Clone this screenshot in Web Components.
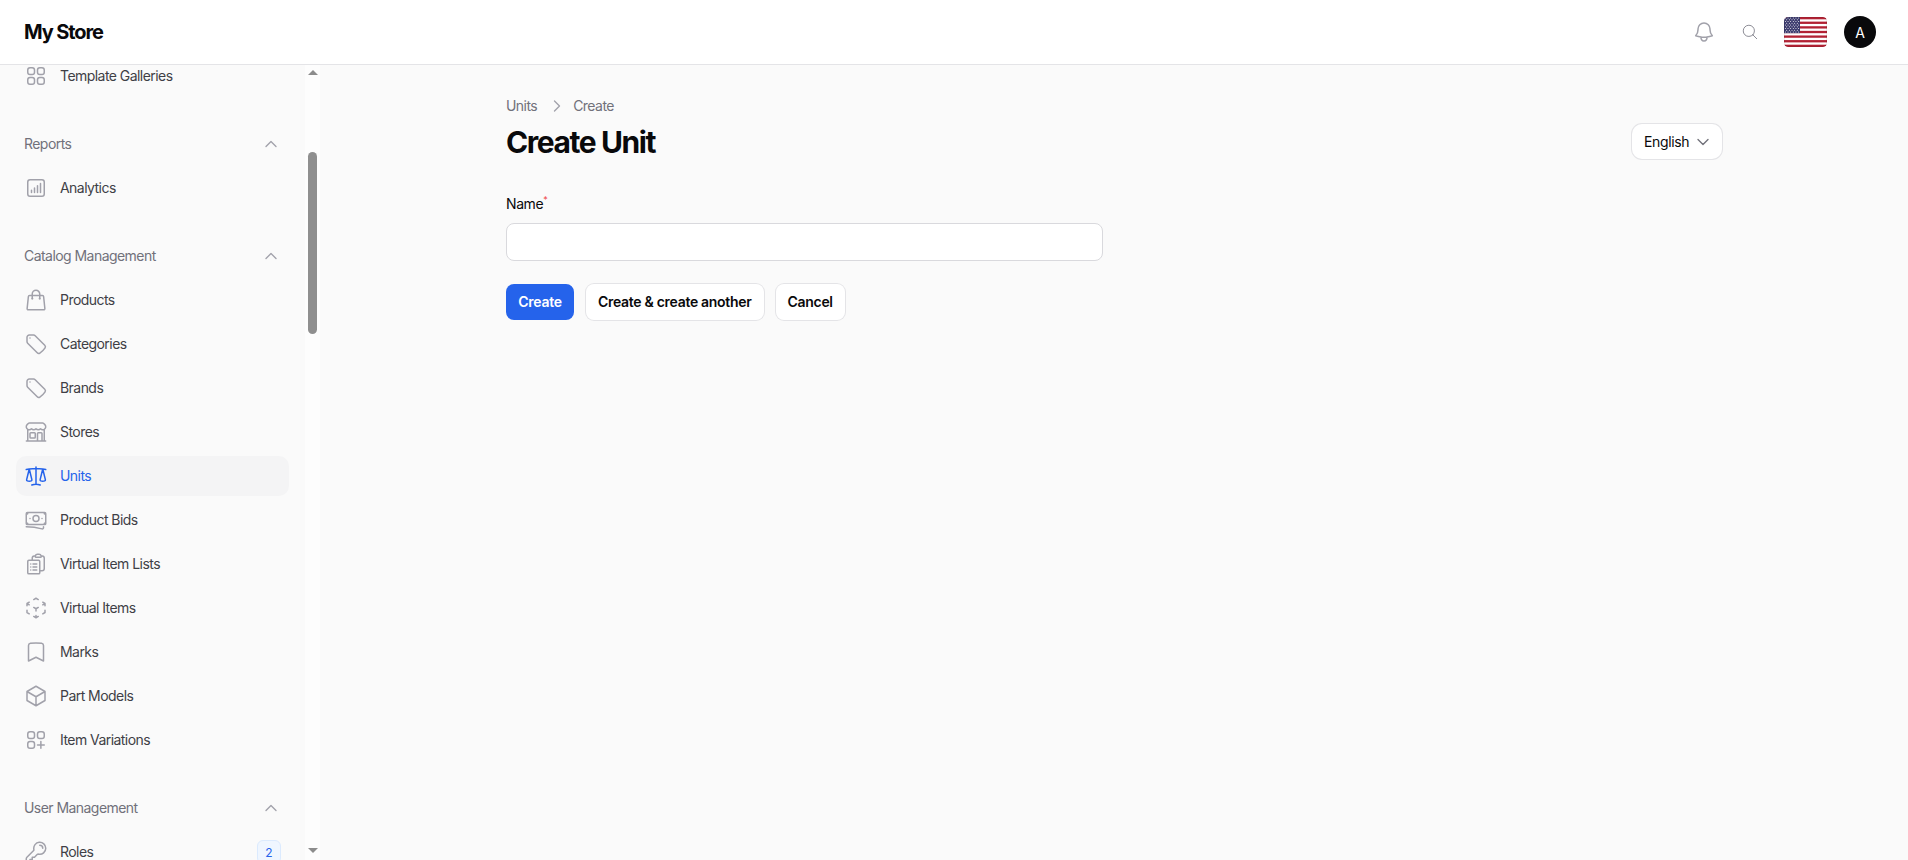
<!doctype html>
<html lang="en">
<head>
<meta charset="utf-8">
<title>Create Unit</title>
<style>
  html, body { margin: 0; height: 100%; overflow: hidden; }
  body { font-family: Inter, "Liberation Sans", sans-serif; background: #fafafa; color: #09090b; }
  app-shell { height: 860px; }
</style>
</head>
<body>
<app-shell>
  <top-bar slot="top" title="My Store"></top-bar>
  <side-nav slot="side">
    <nav-item icon="squares">Template Galleries</nav-item>
    <nav-group label="Reports">
      <nav-item icon="chart">Analytics</nav-item>
    </nav-group>
    <nav-group label="Catalog Management">
      <nav-item icon="bag">Products</nav-item>
      <nav-item icon="tag">Categories</nav-item>
      <nav-item icon="tag">Brands</nav-item>
      <nav-item icon="store">Stores</nav-item>
      <nav-item icon="scale" active>Units</nav-item>
      <nav-item icon="banknotes">Product Bids</nav-item>
      <nav-item icon="clipboard">Virtual Item Lists</nav-item>
      <nav-item icon="cubeTransparent">Virtual Items</nav-item>
      <nav-item icon="bookmark">Marks</nav-item>
      <nav-item icon="cube">Part Models</nav-item>
      <nav-item icon="squaresPlus">Item Variations</nav-item>
    </nav-group>
    <nav-group label="User Management">
      <nav-item icon="key" badge="2">Roles</nav-item>
    </nav-group>
  </side-nav>
  <create-page></create-page>
</app-shell>

<script>
const ICONS = {
  squares: 'M3.75 6A2.25 2.25 0 0 1 6 3.75h2.25A2.25 2.25 0 0 1 10.5 6v2.25a2.25 2.25 0 0 1-2.25 2.25H6a2.25 2.25 0 0 1-2.25-2.25V6ZM3.75 15.75A2.25 2.25 0 0 1 6 13.5h2.25a2.25 2.25 0 0 1 2.25 2.25V18a2.25 2.25 0 0 1-2.25 2.25H6A2.25 2.25 0 0 1 3.75 18v-2.25ZM13.5 6a2.25 2.25 0 0 1 2.25-2.25H18A2.25 2.25 0 0 1 20.25 6v2.25A2.25 2.25 0 0 1 18 10.5h-2.25a2.25 2.25 0 0 1-2.25-2.25V6ZM13.5 15.75a2.25 2.25 0 0 1 2.25-2.25H18a2.25 2.25 0 0 1 2.25 2.25V18A2.25 2.25 0 0 1 18 20.25h-2.25A2.25 2.25 0 0 1 13.5 18v-2.25Z',
  chart: 'M7.5 14.25v2.25m3-4.5v4.5m3-6.75v6.75m3-9v9M6 20.25h12A2.25 2.25 0 0 0 20.25 18V6A2.25 2.25 0 0 0 18 3.75H6A2.25 2.25 0 0 0 3.75 6v12A2.25 2.25 0 0 0 6 20.25Z',
  bag: 'M15.75 10.5V6a3.75 3.75 0 1 0-7.5 0v4.5m11.356-1.993 1.263 12c.07.665-.45 1.243-1.119 1.243H4.25a1.125 1.125 0 0 1-1.12-1.243l1.264-12A1.125 1.125 0 0 1 5.513 7.5h12.974c.576 0 1.059.435 1.119 1.007ZM8.625 10.5a.375.375 0 1 1-.75 0 .375.375 0 0 1 .75 0Zm7.5 0a.375.375 0 1 1-.75 0 .375.375 0 0 1 .75 0Z',
  tag: 'M9.568 3H5.25A2.25 2.25 0 0 0 3 5.25v4.318c0 .597.237 1.17.659 1.591l9.581 9.581c.699.699 1.78.872 2.607.33a18.095 18.095 0 0 0 5.223-5.223c.542-.827.369-1.908-.33-2.607L11.16 3.66A2.25 2.25 0 0 0 9.568 3ZM6 6h.008v.008H6V6Z',
  store: 'M13.5 21v-7.5a.75.75 0 0 1 .75-.75h3a.75.75 0 0 1 .75.75V21m-4.5 0H2.36m11.14 0H18m0 0h3.64m-1.39 0V9.349M3.75 21V9.349m0 0a3.001 3.001 0 0 0 3.75-.615A2.993 2.993 0 0 0 9.75 9.75c.896 0 1.7-.393 2.25-1.016a2.993 2.993 0 0 0 2.25 1.016c.896 0 1.7-.393 2.25-1.015a3.001 3.001 0 0 0 3.75.614m-16.5 0a3.004 3.004 0 0 1-.621-4.72l1.189-1.19A1.5 1.5 0 0 1 5.378 3h13.243a1.5 1.5 0 0 1 1.06.44l1.19 1.189a3 3 0 0 1-.621 4.72M6.75 18h3.75a.75.75 0 0 0 .75-.75V13.5a.75.75 0 0 0-.75-.75H6.75a.75.75 0 0 0-.75.75v3.75c0 .414.336.75.75.75Z',
  scale: 'M12 3v17.25m0 0c-1.472 0-2.882.265-4.185.75M12 20.25c1.472 0 2.882.265 4.185.75M18.75 4.97A48.416 48.416 0 0 0 12 4.5c-2.291 0-4.545.16-6.75.47m13.5 0c1.01.143 2.01.317 3 .52m-3-.52 2.62 10.726c.122.499-.106 1.028-.589 1.202a5.988 5.988 0 0 1-2.031.352 5.988 5.988 0 0 1-2.031-.352c-.483-.174-.711-.703-.59-1.202L18.75 4.971Zm-16.5.52c.99-.203 1.99-.377 3-.52m0 0 2.62 10.726c.122.499-.106 1.028-.589 1.202a5.989 5.989 0 0 1-2.031.352 5.989 5.989 0 0 1-2.031-.352c-.483-.174-.711-.703-.59-1.202L5.25 4.971Z',
  banknotes: 'M2.25 18.75a60.07 60.07 0 0 1 15.797 2.101c.727.198 1.453-.342 1.453-1.096V18.75M3.75 4.5v.75A.75.75 0 0 1 3 6h-.75m0 0v-.375c0-.621.504-1.125 1.125-1.125H20.25M2.25 6v9m18-10.5v.75c0 .414.336.75.75.75h.75m-1.5-1.5h.375c.621 0 1.125.504 1.125 1.125v9.75c0 .621-.504 1.125-1.125 1.125h-.375m1.5-1.5H21a.75.75 0 0 0-.75.75v.75m0 0H3.75m0 0h-.375a1.125 1.125 0 0 1-1.125-1.125V15m1.5 1.5v-.75A.75.75 0 0 0 3 15h-.75M15 10.5a3 3 0 1 1-6 0 3 3 0 0 1 6 0Zm3 0h.008v.008H18V10.5Zm-12 0h.008v.008H6V10.5Z',
  clipboard: 'M9 12h3.75M9 15h3.75M9 18h3.75m3 .75H18a2.25 2.25 0 0 0 2.25-2.25V6.108c0-1.135-.845-2.098-1.976-2.192a48.424 48.424 0 0 0-1.123-.08m-5.801 0c-.065.21-.1.433-.1.664 0 .414.336.75.75.75h4.5a.75.75 0 0 0 .75-.75 2.25 2.25 0 0 0-.1-.664m-5.8 0A2.251 2.251 0 0 1 13.5 2.25H15c1.012 0 1.867.668 2.15 1.586m-5.8 0c-.376.023-.75.05-1.124.08C9.095 4.01 8.25 4.973 8.25 6.108V8.25m0 0H4.875c-.621 0-1.125.504-1.125 1.125v11.25c0 .621.504 1.125 1.125 1.125h9.75c.621 0 1.125-.504 1.125-1.125V9.375c0-.621-.504-1.125-1.125-1.125H8.25ZM6.75 12h.008v.008H6.75V12Zm0 3h.008v.008H6.75V15Zm0 3h.008v.008H6.75V18Z',
  cubeTransparent: 'm21 7.5-2.25-1.313M21 7.5v2.25m0-2.25-2.25 1.313M3 7.5l2.25-1.313M3 7.5l2.25 1.313M3 7.5v2.25m9 3 2.25-1.313M12 12.75l-2.25-1.313M12 12.75V15m0 6.75 2.25-1.313M12 21.75V19.5m0 2.25-2.25-1.313m0-16.875L12 2.25l2.25 1.313M21 14.25v2.25l-2.25 1.313m-13.5 0L3 16.5v-2.25',
  bookmark: 'M17.593 3.322c1.1.128 1.907 1.077 1.907 2.185V21L12 17.25 4.5 21V5.507c0-1.108.806-2.057 1.907-2.185a48.507 48.507 0 0 1 11.186 0Z',
  cube: 'm21 7.5-9-5.25L3 7.5m18 0-9 5.25m9-5.25v9l-9 5.25M3 7.5l9 5.25M3 7.5v9l9 5.25m0-9v9',
  squaresPlus: 'M13.5 16.875h3.375m0 0h3.375m-3.375 0V13.5m0 3.375v3.375M6 10.5h2.25a2.25 2.25 0 0 0 2.25-2.25V6a2.25 2.25 0 0 0-2.25-2.25H6A2.25 2.25 0 0 0 3.75 6v2.25A2.25 2.25 0 0 0 6 10.5Zm0 9.75h2.25A2.25 2.25 0 0 0 10.5 18v-2.25a2.25 2.25 0 0 0-2.25-2.25H6a2.25 2.25 0 0 0-2.25 2.25V18A2.25 2.25 0 0 0 6 20.25Zm9.75-9.75H18a2.25 2.25 0 0 0 2.25-2.25V6A2.25 2.25 0 0 0 18 3.75h-2.25A2.25 2.25 0 0 0 13.5 6v2.25a2.25 2.25 0 0 0 2.25 2.25Z',
  key: 'M15.75 5.25a3 3 0 0 1 3 3m3 0a6 6 0 0 1-7.029 5.912c-.563-.097-1.159.026-1.563.43L10.5 17.25H8.25v2.25H6v2.25H2.25v-2.818c0-.597.237-1.17.659-1.591l6.499-6.499c.404-.404.527-1 .43-1.563A6 6 0 1 1 21.75 8.25Z',
  chevronUp: 'm4.5 15.75 7.5-7.5 7.5 7.5',
  chevronDown: 'm19.5 8.25-7.5 7.5-7.5-7.5',
  chevronRight: 'm8.25 4.5 7.5 7.5-7.5 7.5',
  bell: 'M14.857 17.082a23.848 23.848 0 0 0 5.454-1.31A8.967 8.967 0 0 1 18 9.75V9A6 6 0 0 0 6 9v.75a8.967 8.967 0 0 1-2.312 6.022c1.733.64 3.56 1.085 5.455 1.31m5.714 0a24.255 24.255 0 0 1-5.714 0m5.714 0a3 3 0 1 1-5.714 0',
  search: 'm21 21-5.197-5.197m0 0A7.5 7.5 0 1 0 5.196 5.196a7.5 7.5 0 0 0 10.607 10.607Z'
};

class HeroIcon extends HTMLElement {
  static get observedAttributes() {
    return ['name'];
  }

  constructor() {
    super();
    this.attachShadow({mode: 'open'});
  }

  connectedCallback() {
    this._render();
  }

  attributeChangedCallback() {
    this._render();
  }

  _render() {
    const size = this.getAttribute('size') || 24;
    const stroke = this.getAttribute('stroke') || 1.5;
    this.shadowRoot.innerHTML = `
      <style>
        :host { display: inline-flex; flex: none; width: ${size}px; height: ${size}px; color: inherit; }
        svg { display: block; width: 100%; height: 100%; }
      </style>
      <svg viewBox="0 0 24 24" fill="none" stroke="currentColor" stroke-width="${stroke}" stroke-linecap="round" stroke-linejoin="round"><path d="${ICONS[this.getAttribute('name')] || ''}"/></svg>`;
  }
}
customElements.define('hero-icon', HeroIcon);

var shellTemplate = document.createElement('template');
shellTemplate.innerHTML = `
  <style>
    :host { display: grid; grid-template-rows: 65px 1fr; grid-template-columns: 320px 1fr; }
    .top { grid-column: 1 / -1; }
    .main { min-width: 0; overflow: hidden; }
    .side { display: flex; overflow: hidden; min-height: 0; }
  </style>
  <div class="top"><slot name="top"></slot></div>
  <div class="side"><slot name="side"></slot></div>
  <div class="main"><slot></slot></div>
`;
class AppShell extends HTMLElement {
  constructor() {
    super();
    this.attachShadow({mode: 'open'});
    this.shadowRoot.appendChild(shellTemplate.content.cloneNode(true));
  }
}
customElements.define('app-shell', AppShell);

var topTemplate = document.createElement('template');
topTemplate.innerHTML = `
  <style>
    :host { display: flex; align-items: center; height: 65px; box-sizing: border-box; background: #fff; border-bottom: 1px solid #e4e4e7; padding: 0 32px 0 24px; }
    .brand { font-size: 20px; font-weight: 700; letter-spacing: -1.1px; color: #09090b; }
    .tools { margin-left: auto; display: flex; align-items: center; }
    .bell { color: #a1a1aa; margin-right: 25px; }
    .search { color: #8a8a93; margin-right: 25px; }
    .flag { display: block; width: 43px; height: 30px; border-radius: 4px; margin-right: 17px; }
    .avatar { width: 32px; height: 32px; border-radius: 50%; background: #09090b; color: #fff; font-size: 14px; display: flex; align-items: center; justify-content: center; }
  </style>
  <div class="brand"></div>
  <div class="tools">
    <hero-icon class="bell" name="bell" size="24"></hero-icon>
    <hero-icon class="search" name="search" size="18" stroke="1.3"></hero-icon>
    <svg class="flag" viewBox="0 0 43 30">
      <defs><clipPath id="round"><rect width="43" height="30" rx="4"/></clipPath></defs>
      <g clip-path="url(#round)">
        <rect width="43" height="30" fill="#fff"/>
        <g fill="#b22234">
          <rect y="0" width="43" height="2.31"/><rect y="4.62" width="43" height="2.31"/><rect y="9.23" width="43" height="2.31"/><rect y="13.85" width="43" height="2.31"/><rect y="18.46" width="43" height="2.31"/><rect y="23.08" width="43" height="2.31"/><rect y="27.69" width="43" height="2.31"/>
        </g>
        <rect width="16" height="16.15" fill="#3c3b6e"/>
        <g fill="#fff" id="stars"></g>
      </g>
      <rect x=".5" y=".5" width="42" height="29" rx="3.5" fill="none" stroke="#000" stroke-opacity=".08"/>
    </svg>
    <div class="avatar">A</div>
  </div>
`;
class TopBar extends HTMLElement {
  constructor() {
    super();
    this.attachShadow({mode: 'open'});
    this.shadowRoot.appendChild(topTemplate.content.cloneNode(true));
    this.shadowRoot.querySelector('.brand').textContent = this.getAttribute('title');
    // star field, just dots at this size
    var dots = '';
    for (var row = 0; row < 9; row++) {
      var count = row % 2 ? 5 : 6;
      for (var col = 0; col < count; col++) {
        var x = (row % 2 ? 2.7 : 1.35) + col * 2.65;
        var y = 1.1 + row * 1.75;
        dots += `<circle cx="${x}" cy="${y}" r=".5"/>`;
      }
    }
    this.shadowRoot.querySelector('#stars').innerHTML = dots;
  }
}
customElements.define('top-bar', TopBar);

var sideTemplate = document.createElement('template');
sideTemplate.innerHTML = `
  <style>
    :host { display: flex; width: 320px; height: 795px; overflow: hidden; background: #fafafa; }
    nav { flex: none; width: 305px; box-sizing: border-box; padding: 0 16px; margin-top: -9px; display: flex; flex-direction: column; gap: 28px; }
    .track { flex: none; width: 15px; background: #fdfdfd; position: relative; }
    .arrow { position: absolute; left: 2.5px; width: 0; height: 0; border-left: 5px solid transparent; border-right: 5px solid transparent; }
    .arrow.up { top: 5px; border-bottom: 5.5px solid #8c8c8c; }
    .arrow.down { bottom: 7px; border-top: 5.5px solid #8c8c8c; }
    .thumb { position: absolute; left: 3px; width: 9px; top: 87px; height: 182px; border-radius: 5px; background: #8f8f8f; }
  </style>
  <nav><slot></slot></nav>
  <div class="track"><div class="arrow up"></div><div class="thumb"></div><div class="arrow down"></div></div>
`;
class SideNav extends HTMLElement {
  constructor() {
    super();
    this.attachShadow({mode: 'open'});
    this.shadowRoot.appendChild(sideTemplate.content.cloneNode(true));
  }
}
customElements.define('side-nav', SideNav);

var groupTemplate = document.createElement('template');
groupTemplate.innerHTML = `
  <style>
    :host { display: flex; flex-direction: column; gap: 4px; }
    .head { display: flex; align-items: center; justify-content: space-between; height: 40px; padding: 0 10px 0 8px; font-size: 14px; letter-spacing: -0.55px; color: #71717a; }
    .label { padding-bottom: 1px; }
    hero-icon { color: #a1a1aa; }
  </style>
  <div class="head"><span class="label"></span><hero-icon name="chevronUp" size="16" stroke="2"></hero-icon></div>
  <slot></slot>
`;
class NavGroup extends HTMLElement {
  constructor() {
    super();
    this.attachShadow({mode: 'open'});
    this.shadowRoot.appendChild(groupTemplate.content.cloneNode(true));
    this.shadowRoot.querySelector('.label').textContent = this.getAttribute('label');
  }
}
customElements.define('nav-group', NavGroup);

var itemTemplate = document.createElement('template');
itemTemplate.innerHTML = `
  <style>
    :host { display: flex; align-items: center; gap: 12px; height: 40px; flex: none; padding: 0 8px; border-radius: 10px; font-size: 14px; letter-spacing: -0.55px; color: #3f3f46; }
    :host([active]) { background: #f4f4f5; color: #2563eb; }
    hero-icon { color: #a1a1aa; }
    :host([active]) hero-icon { color: #2563eb; }
    .text { padding-bottom: 1px; }
    .badge { display: none; margin-left: auto; width: 24px; height: 24px; box-sizing: border-box; border: 1px solid #dbeafe; border-radius: 6px; background: #eff6ff; color: #2563eb; font-size: 12px; letter-spacing: 0; align-items: center; justify-content: center; }
  </style>
  <hero-icon></hero-icon><span class="text"><slot></slot></span><span class="badge"></span>
`;
class NavItem extends HTMLElement {
  constructor() {
    super();
    this.attachShadow({mode: 'open'});
    this.shadowRoot.appendChild(itemTemplate.content.cloneNode(true));
    this.shadowRoot.querySelector('hero-icon').setAttribute('name', this.getAttribute('icon'));
    if (this.hasAttribute('badge')) {
      var badge = this.shadowRoot.querySelector('.badge');
      badge.textContent = this.getAttribute('badge');
      badge.style.display = 'flex';
    }
  }
}
customElements.define('nav-item', NavItem);

var buttonTemplate = document.createElement('template');
buttonTemplate.innerHTML = `
  <style>
    :host { display: inline-flex; align-items: center; justify-content: center; box-sizing: border-box; height: 36px; padding: 0 12px 1px; border-radius: 8px; background: #fff; box-shadow: 0 0 0 1px #e4e4e7; font-size: 14px; font-weight: 600; letter-spacing: -0.3px; color: #09090b; }
    :host([primary]) { background: #2563eb; color: #fff; box-shadow: none; min-width: 68px; }
  </style>
  <slot></slot>
`;
class UiButton extends HTMLElement {
  constructor() {
    super();
    this.attachShadow({mode: 'open'});
    this.shadowRoot.appendChild(buttonTemplate.content.cloneNode(true));
  }
}
customElements.define('ui-button', UiButton);

var pageTemplate = document.createElement('template');
pageTemplate.innerHTML = `
  <style>
    :host { display: block; background: #fafafa; height: 795px; }
    .wrap { width: 1216px; margin: 0 auto; padding-top: 31px; box-sizing: border-box; }
    .crumbs { display: flex; align-items: center; gap: 12px; font-size: 14px; letter-spacing: -0.55px; line-height: 20px; color: #71717a; }
    .crumbs hero-icon { color: #a1a1aa; margin-right: -4px; }
    .head { display: flex; align-items: flex-end; justify-content: space-between; }
    h1 { margin: 8px 0 0; font-size: 30px; line-height: 36px; font-weight: 700; letter-spacing: -1.42px; color: #09090b; }
    .lang { display: flex; align-items: center; gap: 6px; height: 35px; width: 90px; margin-bottom: 1px; box-sizing: border-box; padding: 0 0 0 12px; background: #fff; border-radius: 10px; box-shadow: 0 0 0 1px #e4e4e7; font-size: 14px; letter-spacing: -0.35px; color: #09090b; }
    .lang hero-icon { color: #71717a; }
    form { display: block; margin-top: 34px; width: 597px; }
    label { display: block; font-size: 14px; line-height: 20px; letter-spacing: -0.4px; color: #09090b; }
    label sup { color: #ef4444; font-size: 9px; line-height: 0; }
    .input { margin-top: 9px; height: 38px; box-sizing: border-box; background: #fff; border: 1px solid #d9d9dd; border-radius: 8px; }
    .actions { display: flex; gap: 12px; margin-top: 23px; }
  </style>
  <div class="wrap">
    <div class="head">
      <div>
        <div class="crumbs"><span>Units</span><hero-icon name="chevronRight" size="16" stroke="2"></hero-icon><span>Create</span></div>
        <h1>Create Unit</h1>
      </div>
      <div class="lang">English<hero-icon name="chevronDown" size="16" stroke="2"></hero-icon></div>
    </div>
    <form>
      <label>Name<sup>*</sup></label>
      <div class="input"></div>
      <div class="actions">
        <ui-button primary>Create</ui-button>
        <ui-button>Create &amp; create another</ui-button>
        <ui-button>Cancel</ui-button>
      </div>
    </form>
  </div>
`;
class CreatePage extends HTMLElement {
  constructor() {
    super();
    this.attachShadow({mode: 'open'});
    this.shadowRoot.appendChild(pageTemplate.content.cloneNode(true));
  }
}
customElements.define('create-page', CreatePage);
</script>
</body>
</html>
